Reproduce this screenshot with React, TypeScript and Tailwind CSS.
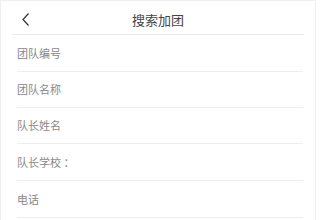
import React from "react";

const rows = [
  { label: "团队编号", h: "h-[37px]" },
  { label: "团队名称", h: "h-[36px]" },
  { label: "队长姓名", h: "h-[36px]" },
  { label: "队长学校 ：", h: "h-[37px]" },
  { label: "电话", h: "h-[37px]" },
];

export default function App() {
  return (
    <div
      className="w-[320px] h-[220px] overflow-hidden bg-white"
      style={{ fontFamily: '"Noto Sans CJK SC", "Noto Sans", sans-serif' }}
    >
      <div className="w-[316px] h-[220px] border-l border-t border-r border-[#efefef]">
        <div className="mx-[11px] grid h-[34px] grid-cols-[40px_1fr_40px] items-center border-b border-[#ececec] pt-[4px]">
          <svg width="8" height="13" viewBox="0 0 8 13" className="ml-[10px]" fill="none">
            <path d="M6.5 0.5 L1 6.5 L6.5 12.5" stroke="#333" strokeWidth="1.2" />
          </svg>
          <h1 className="text-center text-[13px] text-[#444] leading-none">搜索加团</h1>
          <div />
        </div>
        <div className="ml-[16px] mr-[12px]">
          {rows.map((r) => (
            <div key={r.label} className={`${r.h} flex items-center border-b border-[#eeeeee]`}>
              <span className="text-[11px] text-[#888] leading-none">{r.label}</span>
            </div>
          ))}
        </div>
      </div>
    </div>
  );
}
